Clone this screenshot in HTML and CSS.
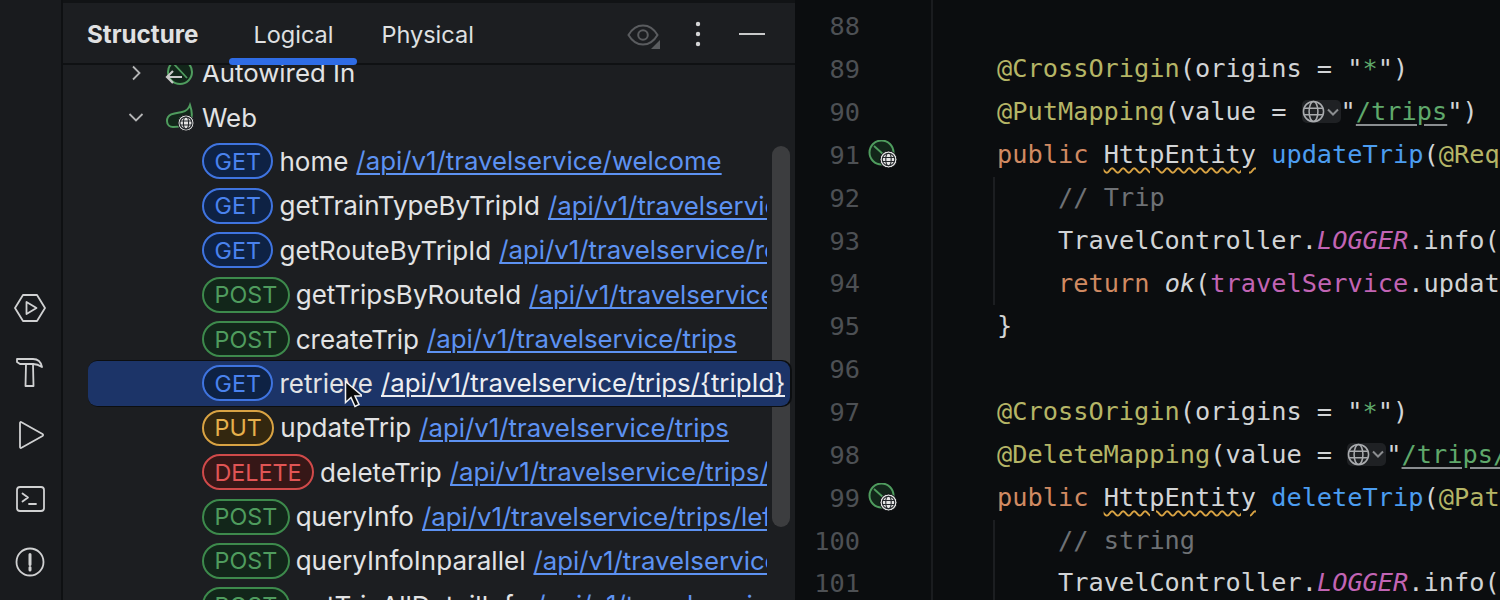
FILE: index.html
```html
<!DOCTYPE html>
<html lang="en">
<head>
<meta charset="utf-8">
<title>Structure</title>
<link rel="stylesheet" href="styles.css">
</head>
<body>
<svg class="defs" width="0" height="0" aria-hidden="true">
  <symbol id="globe" viewBox="0 0 24 24">
    <g fill="none" stroke="currentColor" stroke-width="1.6">
      <circle cx="12" cy="12" r="10.5"/>
      <ellipse cx="12" cy="12" rx="4.600" ry="10.500"/>
      <path d="M2.200 8.500h19.600M2.200 15.500h19.600"/>
    </g>
  </symbol>
  <symbol id="bean" viewBox="0 0 30 30">
    <circle cx="13.500" cy="12.500" r="12" fill="#12261a" stroke="#4f9c5e" stroke-width="2"/>
    <path d="M6 6l10 9" stroke="#4f9c5e" stroke-width="1.800"/>
    <circle cx="20.500" cy="19.500" r="8.500" fill="#e4e4e4" stroke="#0b0d0f" stroke-width="1"/>
    <g fill="none" stroke="#23262a" stroke-width="1.100">
      <circle cx="20.500" cy="19.500" r="6.200"/>
      <ellipse cx="20.500" cy="19.500" rx="2.700" ry="6.200"/>
      <path d="M14.500 17.500h12M14.500 21.500h12"/>
    </g>
  </symbol>
</svg>
<div class="app">
  <nav class="rail">
    <svg class="rail-icon" viewBox="0 0 32 32"><path d="M9 3h14l8 13-8 13H9L1 16z"/><path d="M12.500 10v12l10-6z"/></svg>
    <svg class="rail-icon" viewBox="0 0 32 32"><path d="M3 3h16c5 0 8 3 9 8-3-2-5-3-9-3H6L3 6z"/><path d="M12 8l-.5 22h8L19 8"/></svg>
    <svg class="rail-icon" viewBox="0 0 32 32"><path d="M6 4v24c0 1 .8 1.200 1.500.8L28.500 17c.8-.5.8-1.500 0-2L7.500 3.200C6.800 2.800 6 3 6 4z"/></svg>
    <svg class="rail-icon" viewBox="0 0 32 32"><rect x="3" y="4" width="27" height="24" rx="3"/><path d="M8.500 10.500l5.500 4-5.500 4M15 21h7"/></svg>
    <svg class="rail-icon" viewBox="0 0 32 32"><circle cx="16" cy="16" r="13.500"/><path class="rail-mark" d="M16 8.500v10M16 21.500v2.500"/></svg>
  </nav>

  <section class="panel">
    <header class="panel-head">
      <h1 class="panel-title">Structure</h1>
      <div class="tabs">
        <span class="tab tab-active">Logical</span>
        <span class="tab">Physical</span>
      </div>
      <div class="head-actions">
        <svg class="icon-eye" viewBox="0 0 34 28"><path d="M1.500 13C5 7 10 3.500 16 3.500S27 7 30.500 13C27 19 22 22.500 16 22.500S5 19 1.500 13z"/><circle cx="16" cy="13" r="4.800"/><path class="eye-corner" d="M33 18v9h-9z"/></svg>
        <svg class="icon-dots" viewBox="0 0 6 26"><circle cx="3" cy="3" r="2.200"/><circle cx="3" cy="13" r="2.200"/><circle cx="3" cy="23" r="2.200"/></svg>
        <span class="icon-min"></span>
      </div>
    </header>
    <div class="tree-view">
      <div class="tree">
        <div class="row group">
          <svg class="chevron" viewBox="0 0 16 16"><path d="M5 1.500L11.500 8 5 14.500"/></svg>
          <svg class="group-icon" viewBox="0 0 30 30"><circle cx="15" cy="14" r="12" fill="#12261a" stroke="#4f9c5e" stroke-width="2"/><path d="M8 5l14 15" stroke="#4f9c5e" stroke-width="1.800"/><path d="M2 19h15M8 13l-6 6 6 6" fill="none" stroke="#c9c9c9" stroke-width="2.200"/></svg>
          <span class="group-name">Autowired In</span>
        </div>
        <div class="row group">
          <svg class="chevron" viewBox="0 0 16 16"><path d="M1.500 5L8 11.500 14.500 5"/></svg>
          <svg class="group-icon" viewBox="0 0 30 30"><path d="M2 19C2 11 12 11 17 10c5-1 7-4 8-7 2 6 3 12 0 16-4 5-12 6-17 6-3 0-6-2-6-6z" fill="#12261a" stroke="#4f9c5e" stroke-width="2"/><circle cx="21" cy="21" r="8" fill="#e4e4e4" stroke="#1c1e21"/><g fill="none" stroke="#23262a" stroke-width="1.100"><circle cx="21" cy="21" r="6"/><ellipse cx="21" cy="21" rx="2.600" ry="6"/><path d="M15 19h12M15 23h12"/></g></svg>
          <span class="group-name">Web</span>
        </div>
        <div class="row"><span class="badge get">GET</span><span class="name">home</span><a class="link">/api/v1/travelservice/welcome</a></div>
        <div class="row"><span class="badge get">GET</span><span class="name">getTrainTypeByTripId</span><a class="link">/api/v1/travelservice/train_types/{tripId}</a></div>
        <div class="row"><span class="badge get">GET</span><span class="name">getRouteByTripId</span><a class="link">/api/v1/travelservice/routes/{tripId}</a></div>
        <div class="row"><span class="badge post">POST</span><span class="name">getTripsByRouteId</span><a class="link">/api/v1/travelservice/trips/routes</a></div>
        <div class="row"><span class="badge post">POST</span><span class="name">createTrip</span><a class="link">/api/v1/travelservice/trips</a></div>
        <div class="row row-selected">
          <span class="badge get">GET</span><span class="name">retrieve</span><a class="link">/api/v1/travelservice/trips/{tripId}</a>
          <svg class="cursor" viewBox="0 0 18 28"><path d="M1.500 1.500v21l5.500-5 4 9 4-2-4-8.500h7.500z" fill="#0c0c0c" stroke="#f2f2f2" stroke-width="1.500"/></svg>
        </div>
        <div class="row"><span class="badge put">PUT</span><span class="name">updateTrip</span><a class="link">/api/v1/travelservice/trips</a></div>
        <div class="row"><span class="badge del">DELETE</span><span class="name">deleteTrip</span><a class="link">/api/v1/travelservice/trips/{tripId}</a></div>
        <div class="row"><span class="badge post">POST</span><span class="name">queryInfo</span><a class="link">/api/v1/travelservice/trips/left</a></div>
        <div class="row"><span class="badge post">POST</span><span class="name">queryInfoInparallel</span><a class="link">/api/v1/travelservice/trips/left_parallel</a></div>
        <div class="row"><span class="badge post">POST</span><span class="name">getTripAllDetailInfo</span><a class="link">/api/v1/travelservice/trip_detail</a></div>
      </div>
      <div class="scrollbar"></div>
    </div>
  </section>

  <main class="editor">
    <div class="gutter">
      <div class="gline"><span class="num">88</span></div>
      <div class="gline"><span class="num">89</span></div>
      <div class="gline"><span class="num">90</span></div>
      <div class="gline"><span class="num">91</span><svg class="gicon"><use href="#bean"/></svg></div>
      <div class="gline"><span class="num">92</span></div>
      <div class="gline"><span class="num">93</span></div>
      <div class="gline"><span class="num">94</span></div>
      <div class="gline"><span class="num">95</span></div>
      <div class="gline"><span class="num">96</span></div>
      <div class="gline"><span class="num">97</span></div>
      <div class="gline"><span class="num">98</span></div>
      <div class="gline"><span class="num">99</span><svg class="gicon"><use href="#bean"/></svg></div>
      <div class="gline"><span class="num">100</span></div>
      <div class="gline"><span class="num">101</span></div>
    </div>
    <div class="code">
      <div class="line"></div>
      <div class="line"><span class="ann">@CrossOrigin</span>(origins = "<span class="str">*</span>")</div>
      <div class="line"><span class="ann">@PutMapping</span>(value = <span class="inlay"><svg class="inlay-globe"><use href="#globe"/></svg><svg class="inlay-chev" viewBox="0 0 12 8"><path d="M1 1.500l5 5 5-5"/></svg></span>"<span class="str url">/trips</span>")</div>
      <div class="line"><span class="kw">public</span> <span class="warn">HttpEntity</span> <span class="fn">updateTrip</span>(<span class="ann">@Req</span></div>
      <div class="block">
        <div class="line"><span class="cmt">// Trip</span></div>
        <div class="line">TravelController.<span class="static">LOGGER</span>.info(</div>
        <div class="line"><span class="kw">return</span> <em>ok</em>(<span class="field">travelService</span>.updat</div>
      </div>
      <div class="line">}</div>
      <div class="line"></div>
      <div class="line"><span class="ann">@CrossOrigin</span>(origins = "<span class="str">*</span>")</div>
      <div class="line"><span class="ann">@DeleteMapping</span>(value = <span class="inlay"><svg class="inlay-globe"><use href="#globe"/></svg><svg class="inlay-chev" viewBox="0 0 12 8"><path d="M1 1.500l5 5 5-5"/></svg></span>"<span class="str url">/trips/</span></div>
      <div class="line"><span class="kw">public</span> <span class="warn">HttpEntity</span> <span class="fn">deleteTrip</span>(<span class="ann">@Pat</span></div>
      <div class="block">
        <div class="line"><span class="cmt">// string</span></div>
        <div class="line">TravelController.<span class="static">LOGGER</span>.info(</div>
      </div>
    </div>
  </main>
</div>
</body>
</html>
```
FILE: styles.css
```css
* { box-sizing: border-box; }
html, body { margin: 0; height: 100%; overflow: hidden; background: #0b0d0f; }
.defs { position: absolute; }
.app { display: flex; width: 1500px; height: 600px; font-family: Inter, "Liberation Sans", sans-serif; color: #e2e3e4; }

.rail { flex: 0 0 63px; background: #191b1e; border-right: 2px solid #0e1012; display: flex; flex-direction: column; align-items: center; justify-content: flex-end; gap: 31.500px; padding: 0 1px 22px 0; }
.rail-icon { width: 32px; height: 32px; flex: none; fill: none; stroke: #d0d1d2; stroke-width: 1.800; stroke-linejoin: round; stroke-linecap: round; }
.rail-mark { stroke-width: 3; }

.panel { flex: 0 0 732px; background: #1c1e21; border-top: 3px solid #111315; display: flex; flex-direction: column; overflow: hidden; }
.panel-head { flex: 0 0 62px; display: flex; align-items: center; padding: 2px 30px 0 24px; border-bottom: 2px solid #0f1113; }
.panel-title { margin: 0; font-size: 24.200px; font-weight: 700; color: #e0e1e2; }
.tabs { display: flex; align-self: stretch; margin: -2px 0 0 31px; padding-top: 2px; }
.tab { display: flex; align-items: center; padding: 0 24px; font-size: 23.500px; color: #dfe0e1; position: relative; }
.tab-active::after { content: ""; position: absolute; left: 0; right: 0; bottom: -2px; height: 7px; border-radius: 4px; background: #2f6ce5; }
.head-actions { margin-left: auto; display: flex; align-items: center; }
.icon-eye { width: 34px; height: 28px; fill: none; stroke: #5a5c5f; stroke-width: 2; margin-top: 3px; }
.eye-corner { fill: #5a5c5f; stroke: none; }
.icon-dots { width: 6px; height: 26px; fill: #d5d6d7; margin-left: 34px; }
.icon-min { width: 26px; height: 2px; background: #c8c9ca; margin-left: 38px; }

.tree-view { flex: 1; position: relative; overflow: hidden; }
.tree { margin-top: -14.500px; }
.row { position: relative; display: flex; align-items: center; gap: 6px; height: 44.400px; margin-left: 139px; margin-right: 28px; white-space: nowrap; overflow: hidden; }
.group { margin-left: 65px; overflow: visible; }
.chevron { width: 16px; height: 16px; fill: none; stroke: #b4b5b6; stroke-width: 1.800; flex: none; }
.group-icon { width: 30px; height: 30px; flex: none; margin-left: 15px; margin-right: 1px; }
.group-name { flex: none; font-size: 25.800px; }
.name { flex: none; font-size: 26px; }
.link { flex: 0 1 auto; min-width: 0; overflow: hidden; margin-left: 2px; font-size: 25.800px; line-height: 36px; color: #5d92f2; text-decoration: underline; text-underline-offset: 3px; text-decoration-thickness: 1.500px; }
.badge { flex: none; display: flex; align-items: center; height: 36px; padding: 0 10.500px; border-radius: 18px; border: 2px solid; font-size: 23.300px; }
.get { border-color: #3f74e0; background: #0e2244; color: #4a82ee; }
.post { border-color: #3d8a4c; background: #12261a; color: #4f9c5e; }
.put { border-color: #d9a343; background: #33270f; color: #e6b04c; }
.del { border-color: #d04a4a; background: #361717; color: #e05555; }
.row-selected { margin-left: 25px; margin-right: 5px; padding-left: 114px; background: #1c3468; border-radius: 9px; overflow: visible; z-index: 2; box-shadow: 1px 0 0 1px #0c0e10; }
.row-selected .link { color: #eceef2; }
.cursor { position: absolute; left: 256px; top: 19px; width: 18px; height: 28px; }
.scrollbar { position: absolute; left: 709px; top: 81px; width: 18px; height: 381px; border-radius: 9px; background: #3c3d3f; z-index: 1; }

.editor { flex: 1; display: flex; min-width: 0; overflow: hidden; font-family: "DejaVu Sans Mono", "Liberation Mono", monospace; font-size: 25.300px; color: #d2d4d6; }
.gutter { flex: 0 0 138px; border-right: 2px solid #1a1c1f; padding-top: 5.500px; }
.gline { display: flex; align-items: center; height: 42.850px; }
.num { width: 65px; text-align: right; color: #4d5054; }
.gicon { width: 30px; height: 30px; margin-left: 8px; }
.code { flex: 1; padding: 5.500px 0 0 60px; white-space: nowrap; }
.line { height: 42.850px; line-height: 42.850px; padding-left: 4px; }
.block { border-left: 2px solid #1c1e21; }
.block .line { padding-left: 63px; }
.ann { color: #b5b566; }
.str { color: #5fa86b; }
.url { text-decoration: underline; text-decoration-color: #8a8d90; text-underline-offset: 4px; }
.kw { color: #d08a62; }
.fn { color: #4c9df0; }
.cmt { color: #6e7175; }
.static { color: #c264b4; font-style: italic; }
.field { color: #c264b4; }
.warn { text-decoration: underline wavy #d9a343 1.500px; text-underline-offset: 4px; }
em { font-style: italic; }
.inlay { display: inline-flex; align-items: center; width: 39px; height: 23px; vertical-align: -3px; border-radius: 5px; background: #1f2124; }
.inlay-globe { width: 23px; height: 23px; color: #a9abae; }
.inlay-chev { width: 12px; height: 8px; margin-left: 2px; fill: none; stroke: #8b8d90; stroke-width: 2; }
```
